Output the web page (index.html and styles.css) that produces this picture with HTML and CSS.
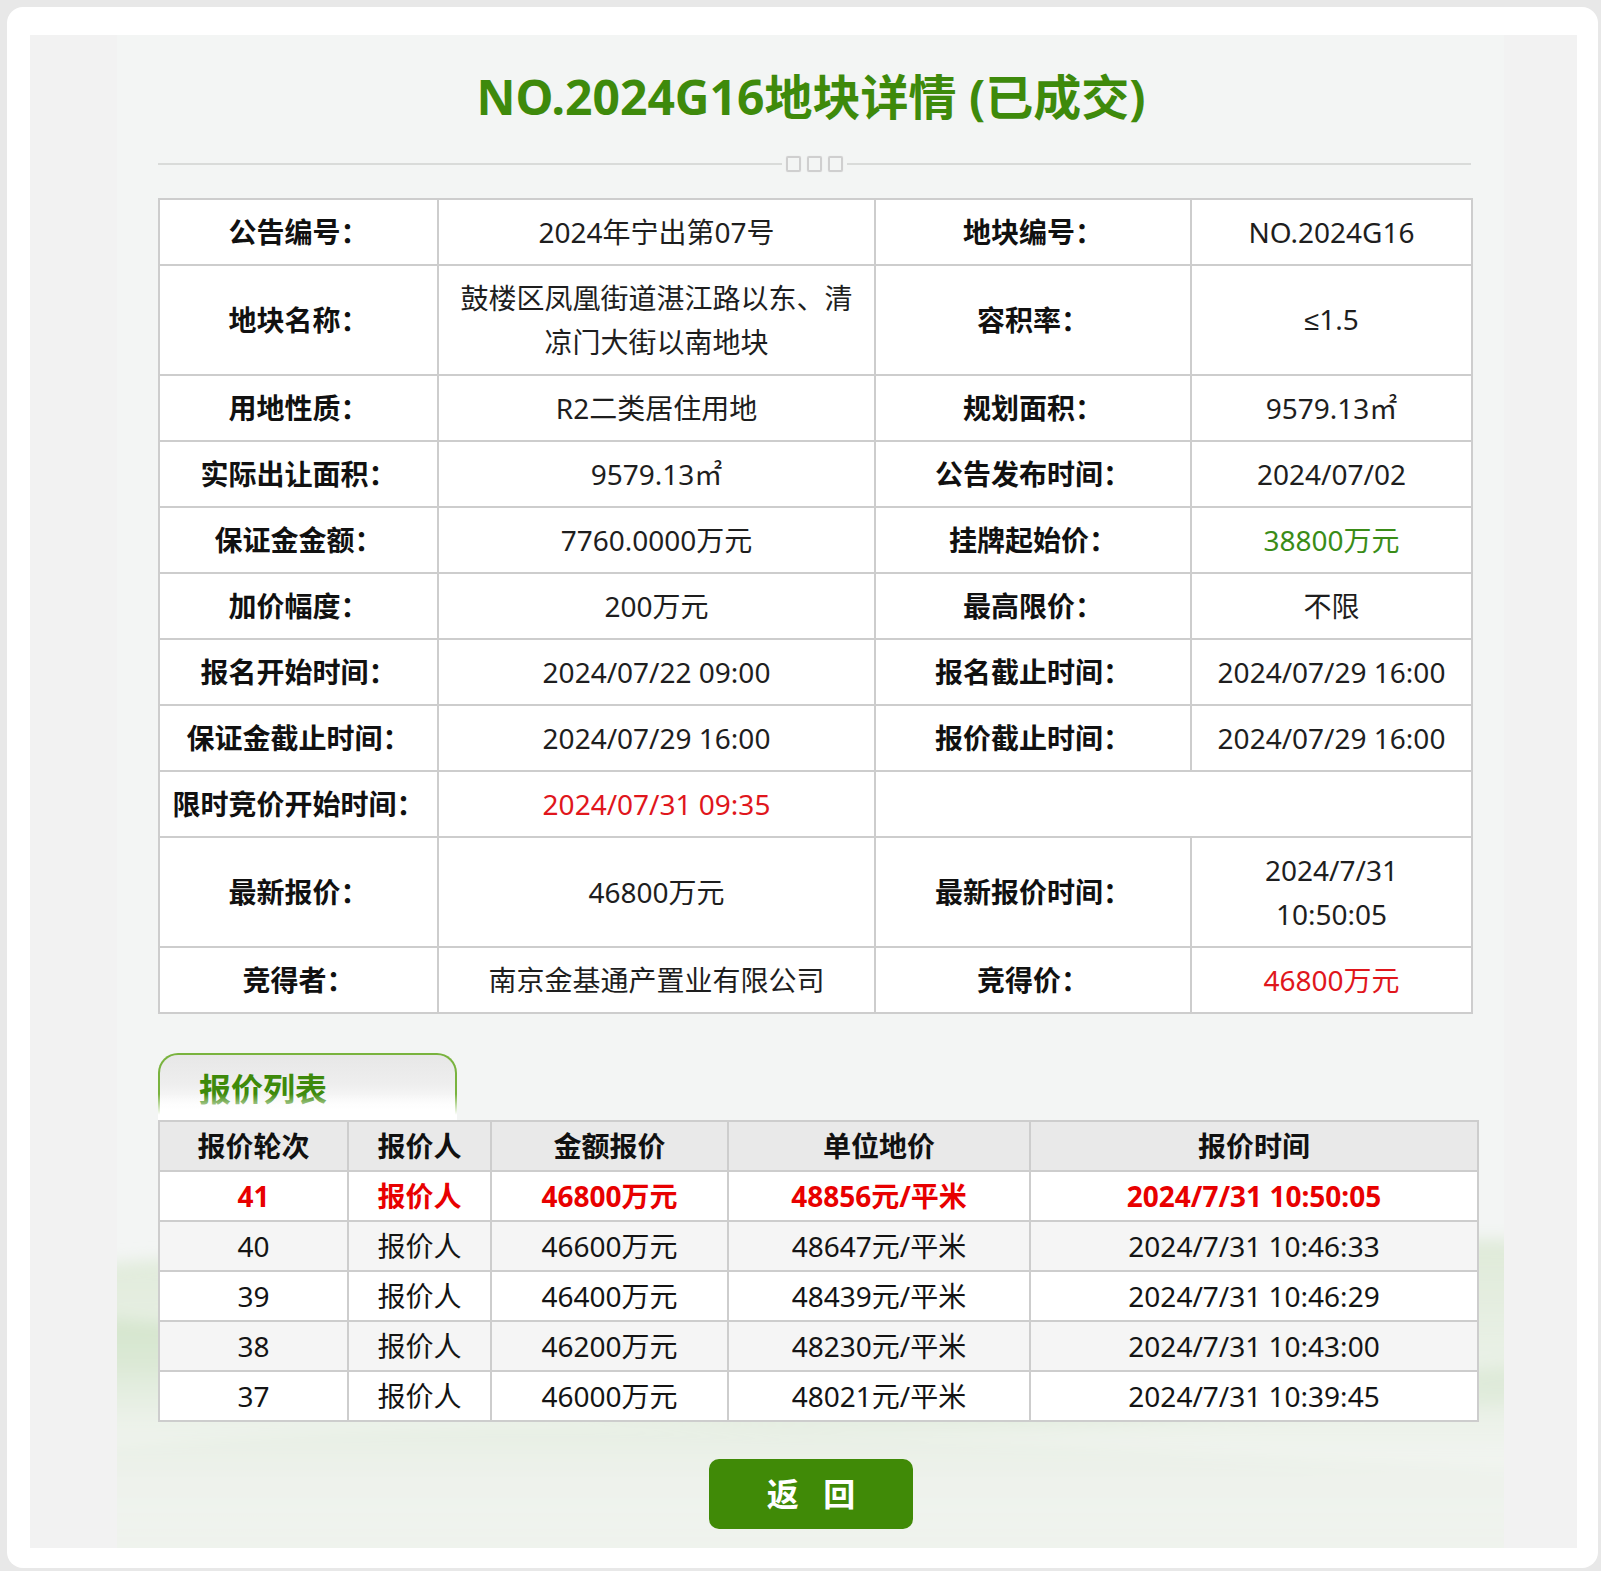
FILE: index.html
```html
<!DOCTYPE html>
<html lang="zh-CN">
<head>
<meta charset="utf-8">
<title>NO.2024G16地块详情</title>
<link rel="stylesheet" href="styles.css">
</head>
<body>
<div class="card">
  <div class="panel">
    <div class="center">
      <svg class="scenery" viewBox="0 0 1387 340" preserveAspectRatio="none" aria-hidden="true">
        <defs>
          <filter id="soft" x="-5%" y="-20%" width="110%" height="140%">
            <feGaussianBlur stdDeviation="8"/>
          </filter>
          <linearGradient id="gBack" x1="0" y1="0" x2="0" y2="1">
            <stop offset="0" stop-color="#dce9d5" stop-opacity="0.9"/>
            <stop offset="0.4" stop-color="#e6efe2" stop-opacity="0.7"/>
            <stop offset="1" stop-color="#f3f5f2" stop-opacity="0"/>
          </linearGradient>
          <linearGradient id="gMid" x1="0" y1="0" x2="0" y2="1">
            <stop offset="0" stop-color="#d2e4ca" stop-opacity="0.9"/>
            <stop offset="0.5" stop-color="#e0ebdb" stop-opacity="0.55"/>
            <stop offset="1" stop-color="#f3f5f2" stop-opacity="0"/>
          </linearGradient>
          <linearGradient id="gFog" x1="0" y1="0" x2="0" y2="1">
            <stop offset="0" stop-color="#f4f6f3" stop-opacity="0"/>
            <stop offset="0.5" stop-color="#f3f5f2" stop-opacity="0.85"/>
            <stop offset="1" stop-color="#eef2ec" stop-opacity="1"/>
          </linearGradient>
          <linearGradient id="gLow" x1="0" y1="0" x2="0" y2="1">
            <stop offset="0" stop-color="#e2ecde" stop-opacity="0.6"/>
            <stop offset="1" stop-color="#eef2ec" stop-opacity="0"/>
          </linearGradient>
        </defs>
        <g filter="url(#soft)">
          <path d="M-20,56 C90,48 200,42 330,46 C560,54 820,30 1060,34 C1200,36 1300,30 1407,32 L1407,360 L-20,360 Z" fill="url(#gBack)"/>
          <path d="M-20,110 C70,114 150,126 230,146 C330,168 420,186 560,198 C760,213 1000,188 1407,158 L1407,360 L-20,360 Z" fill="url(#gMid)"/>
          <path d="M-20,156 C200,176 420,216 700,221 C950,226 1150,206 1407,196 L1407,360 L-20,360 Z" fill="url(#gFog)"/>
          <path d="M-20,240 C180,224 380,216 620,223 C860,231 1100,247 1407,262 L1407,360 L-20,360 Z" fill="url(#gLow)"/>
        </g>
      </svg>
      <div class="content">
        <h1 class="title">NO.2024G16地块详情 (已成交)</h1>
        <div class="divider">
          <span class="rule"></span>
          <span class="marks"><i></i><i></i><i></i></span>
          <span class="rule"></span>
        </div>
        <table class="info">
          <colgroup>
            <col class="c1"><col class="c2"><col class="c3"><col class="c4">
          </colgroup>
          <tr>
            <th>公告编号：</th><td>2024年宁出第07号</td>
            <th>地块编号：</th><td>NO.2024G16</td>
          </tr>
          <tr>
            <th>地块名称：</th><td>鼓楼区凤凰街道湛江路以东、清凉门大街以南地块</td>
            <th>容积率：</th><td><span class="sym">≤</span>1.5</td>
          </tr>
          <tr>
            <th>用地性质：</th><td>R2二类居住用地</td>
            <th>规划面积：</th><td>9579.13㎡</td>
          </tr>
          <tr>
            <th>实际出让面积：</th><td>9579.13㎡</td>
            <th>公告发布时间：</th><td>2024/07/02</td>
          </tr>
          <tr>
            <th>保证金金额：</th><td>7760.0000万元</td>
            <th>挂牌起始价：</th><td class="green">38800万元</td>
          </tr>
          <tr>
            <th>加价幅度：</th><td>200万元</td>
            <th>最高限价：</th><td>不限</td>
          </tr>
          <tr>
            <th>报名开始时间：</th><td>2024/07/22 09:00</td>
            <th>报名截止时间：</th><td>2024/07/29 16:00</td>
          </tr>
          <tr>
            <th>保证金截止时间：</th><td>2024/07/29 16:00</td>
            <th>报价截止时间：</th><td>2024/07/29 16:00</td>
          </tr>
          <tr>
            <th>限时竞价开始时间：</th><td class="red">2024/07/31 09:35</td>
            <td colspan="2"></td>
          </tr>
          <tr>
            <th>最新报价：</th><td>46800万元</td>
            <th>最新报价时间：</th><td>2024/7/31<br>10:50:05</td>
          </tr>
          <tr>
            <th>竞得者：</th><td>南京金基通产置业有限公司</td>
            <th>竞得价：</th><td class="red">46800万元</td>
          </tr>
        </table>

        <div class="tab">报价列表</div>
        <table class="bids">
          <colgroup>
            <col class="b1"><col class="b2"><col class="b3"><col class="b4"><col class="b5">
          </colgroup>
          <tr class="head">
            <th>报价轮次</th><th>报价人</th><th>金额报价</th><th>单位地价</th><th>报价时间</th>
          </tr>
          <tr class="top">
            <td>41</td><td>报价人</td><td>46800万元</td><td>48856元/平米</td><td>2024/7/31 10:50:05</td>
          </tr>
          <tr class="alt">
            <td>40</td><td>报价人</td><td>46600万元</td><td>48647元/平米</td><td>2024/7/31 10:46:33</td>
          </tr>
          <tr>
            <td>39</td><td>报价人</td><td>46400万元</td><td>48439元/平米</td><td>2024/7/31 10:46:29</td>
          </tr>
          <tr class="alt">
            <td>38</td><td>报价人</td><td>46200万元</td><td>48230元/平米</td><td>2024/7/31 10:43:00</td>
          </tr>
          <tr>
            <td>37</td><td>报价人</td><td>46000万元</td><td>48021元/平米</td><td>2024/7/31 10:39:45</td>
          </tr>
        </table>

        <div class="actions">
          <a class="back" href="#">返 回</a>
        </div>
      </div>
    </div>
  </div>
</div>
</body>
</html>
```

FILE: styles.css
```css
html, body {
  margin: 0;
  padding: 0;
  background: #e8e8e8;
}

body {
  font-family: "Noto Sans", "Noto Sans CJK SC", sans-serif;
  color: #1a1a1a;
  overflow: hidden;
}

.card {
  box-sizing: border-box;
  width: 1591px;
  height: 1561px;
  margin: 7px 0 0 7px;
  padding: 28px 21px 0 23px;
  background: #ffffff;
  border-radius: 16px;
}

.panel {
  box-sizing: border-box;
  width: 1547px;
  height: 1513px;
  padding-left: 87px;
  background: #f2f2f2;
  display: flex;
}

.center {
  position: relative;
  width: 1387px;
  height: 100%;
  background: #f3f5f4;
  overflow: hidden;
}

.scenery {
  position: absolute;
  left: 0;
  bottom: 0;
  width: 1387px;
  height: 340px;
}

.content {
  position: relative;
  padding-left: 41px;
  padding-top: 31px;
  width: 1319px;
}

.title {
  width: 1306px;
  margin: 0;
  height: 62px;
  line-height: 62px;
  text-align: center;
  font-size: 48px;
  font-weight: 700;
  color: #3e8a0b;
}

.divider {
  width: 1313px;
  margin-top: 27px;
  height: 17px;
  display: flex;
  align-items: center;
}

.rule {
  flex: 1;
  height: 2px;
  background: #d9dbd9;
}

.marks {
  display: flex;
  gap: 6px;
  margin: 0 4px;
}

.marks i {
  display: block;
  box-sizing: border-box;
  width: 15px;
  height: 16px;
  border: 2px solid #cfcfcf;
  border-radius: 2px;
  box-shadow: 0 0 1px #d8d8d8;
}

table {
  border-collapse: collapse;
  table-layout: fixed;
}

.info {
  width: 1313px;
  margin-top: 26px;
  background: #ffffff;
  font-size: 28px;
}

.info col.c1 { width: 279px; }
.info col.c2 { width: 437px; }
.info col.c3 { width: 316px; }
.info col.c4 { width: 281px; }

.info th,
.info td {
  border: 2px solid #cdcdcd;
  padding: 10px 20px;
  line-height: 44px;
  text-align: center;
  vertical-align: middle;
}

.info th {
  padding-left: 4px;
  padding-right: 4px;
  white-space: nowrap;
  font-weight: 700;
  color: #111111;
}

.info td {
  font-weight: 400;
  color: #1e1e1e;
}

.info .sym {
  font-family: "Liberation Sans", sans-serif;
  font-size: 27px;
}

.info td.green { color: #3a8c17; }
.info td.red { color: #e0161c; }

.tab {
  box-sizing: border-box;
  position: relative;
  width: 299px;
  height: 67px;
  margin-top: 39px;
  padding: 14px 0 0 39px;
  font-size: 32px;
  line-height: 40px;
  font-weight: 700;
  color: #3e8a0b;
  border: 2px solid #79b33e;
  border-bottom: none;
  border-radius: 20px 20px 0 0;
  background: linear-gradient(to bottom, #e7e7e7 0%, #eeeeee 45%, #ffffff 85%);
}

.tab::after {
  content: "";
  position: absolute;
  left: -2px;
  right: -2px;
  bottom: 0;
  height: 26px;
  background: linear-gradient(to bottom, rgba(255,255,255,0) 0%, #ffffff 80%);
}

.bids {
  width: 1319px;
  font-size: 28px;
  background: #ffffff;
}

.bids col.b1 { width: 189px; }
.bids col.b2 { width: 143px; }
.bids col.b3 { width: 237px; }
.bids col.b4 { width: 302px; }
.bids col.b5 { width: 448px; }

.bids th,
.bids td {
  border: 2px solid #cdcdcd;
  height: 48px;
  padding: 0 6px;
  line-height: 46px;
  text-align: center;
  vertical-align: middle;
  color: #141414;
}

.bids .head th {
  background: #e9e9e9;
  font-weight: 700;
  color: #111111;
}

.bids tr.top td {
  color: #e80000;
  font-weight: 700;
}

.bids tr.alt td {
  background: #f5f5f5;
}

.actions {
  width: 1306px;
  margin-top: 37px;
  display: flex;
  justify-content: center;
}

.back {
  display: block;
  width: 204px;
  height: 70px;
  line-height: 70px;
  border-radius: 10px;
  background: #408a07;
  color: #ffffff;
  text-align: center;
  text-decoration: none;
  font-size: 32px;
  font-weight: 700;
  letter-spacing: 6px;
  text-indent: 6px;
  word-spacing: 4px;
}
```
